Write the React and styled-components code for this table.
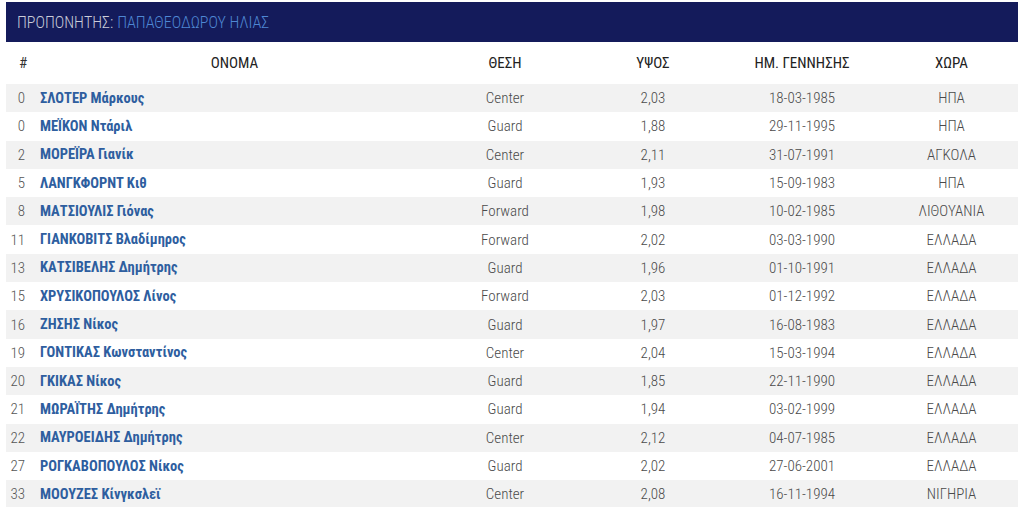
import styled, { createGlobalStyle } from "styled-components";

const GlobalStyle = createGlobalStyle`
  body {
    margin: 0;
    background: #ffffff;
    font-family: "Roboto Condensed", Roboto, "Liberation Sans", sans-serif;
    overflow: hidden;
  }
`;

const Page = styled.div`
  padding: 2px 6px 0 6px;
  width: 1012px;
`;

const CoachBar = styled.div`
  height: 40px;
  background-color: #141b5b;
  display: flex;
  align-items: center;
  padding: 0 11px;
  font-size: 16px;
  color: #c9ccd9;
  font-weight: 300;
`;

const CoachName = styled.span`
  color: #4f88d4;
  margin-left: 4px;
`;

const Table = styled.div`
  display: flex;
  flex-direction: column;
`;

const Row = styled.div`
  display: grid;
  grid-template-columns: 28px 401px 140px 156px 142px 145px;
  align-items: center;
  height: ${(p) => (p.$head ? "42px" : "28.3px")};
  background-color: ${(p) => (p.$striped ? "#f2f2f2" : "#ffffff")};
  font-size: 15px;
  color: #4a4a4a;
  font-weight: ${(p) => (p.$head ? 400 : 300)};
`;

const Num = styled.div`
  text-align: right;
  padding-right: 9px;
  color: #555;
`;

const HeadHash = styled.div`
  padding-left: 13px;
  color: #333;
`;

const Cell = styled.div`
  text-align: center;
  padding-left: ${(p) => (p.$last ? "12px" : "0")};
  color: ${(p) => (p.$head ? "#222" : "#4a4a4a")};
  white-space: nowrap;
`;

const Name = styled.div`
  padding-left: 6px;
  font-size: 14.5px;
  font-weight: 700;
  color: #2e5e9f;
  white-space: nowrap;
`;

const players = [
  ["0", "ΣΛΟΤΕΡ Μάρκους", "Center", "2,03", "18-03-1985", "ΗΠΑ"],
  ["0", "ΜΕΪΚΟΝ Ντάριλ", "Guard", "1,88", "29-11-1995", "ΗΠΑ"],
  ["2", "ΜΟΡΕΪΡΑ Γιανίκ", "Center", "2,11", "31-07-1991", "ΑΓΚΟΛΑ"],
  ["5", "ΛΑΝΓΚΦΟΡΝΤ Κιθ", "Guard", "1,93", "15-09-1983", "ΗΠΑ"],
  ["8", "ΜΑΤΣΙΟΥΛΙΣ Γιόνας", "Forward", "1,98", "10-02-1985", "ΛΙΘΟΥΑΝΙΑ"],
  ["11", "ΓΙΑΝΚΟΒΙΤΣ Βλαδίμηρος", "Forward", "2,02", "03-03-1990", "ΕΛΛΑΔΑ"],
  ["13", "ΚΑΤΣΙΒΕΛΗΣ Δημήτρης", "Guard", "1,96", "01-10-1991", "ΕΛΛΑΔΑ"],
  ["15", "ΧΡΥΣΙΚΟΠΟΥΛΟΣ Λίνος", "Forward", "2,03", "01-12-1992", "ΕΛΛΑΔΑ"],
  ["16", "ΖΗΣΗΣ Νίκος", "Guard", "1,97", "16-08-1983", "ΕΛΛΑΔΑ"],
  ["19", "ΓΟΝΤΙΚΑΣ Κωνσταντίνος", "Center", "2,04", "15-03-1994", "ΕΛΛΑΔΑ"],
  ["20", "ΓΚΙΚΑΣ Νίκος", "Guard", "1,85", "22-11-1990", "ΕΛΛΑΔΑ"],
  ["21", "ΜΩΡΑΪΤΗΣ Δημήτρης", "Guard", "1,94", "03-02-1999", "ΕΛΛΑΔΑ"],
  ["22", "ΜΑΥΡΟΕΙΔΗΣ Δημήτρης", "Center", "2,12", "04-07-1985", "ΕΛΛΑΔΑ"],
  ["27", "ΡΟΓΚΑΒΟΠΟΥΛΟΣ Νίκος", "Guard", "2,02", "27-06-2001", "ΕΛΛΑΔΑ"],
  ["33", "ΜΟΟΥΖΕΣ Κίνγκσλεϊ", "Center", "2,08", "16-11-1994", "ΝΙΓΗΡΙΑ"],
];

export default function App() {
  return (
    <>
      <GlobalStyle />
      <Page>
        <CoachBar>
          ΠΡΟΠΟΝΗΤΗΣ:<CoachName>ΠΑΠΑΘΕΟΔΩΡΟΥ ΗΛΙΑΣ</CoachName>
        </CoachBar>
        <Table>
          <Row $head>
            <HeadHash>#</HeadHash>
            <Cell $head>ΟΝΟΜΑ</Cell>
            <Cell $head>ΘΕΣΗ</Cell>
            <Cell $head>ΥΨΟΣ</Cell>
            <Cell $head>ΗΜ. ΓΕΝΝΗΣΗΣ</Cell>
            <Cell $head $last>ΧΩΡΑ</Cell>
          </Row>
          {players.map((p, i) => (
            <Row key={i} $striped={i % 2 === 0}>
              <Num>{p[0]}</Num>
              <Name>{p[1]}</Name>
              <Cell>{p[2]}</Cell>
              <Cell>{p[3]}</Cell>
              <Cell>{p[4]}</Cell>
              <Cell $last>{p[5]}</Cell>
            </Row>
          ))}
        </Table>
      </Page>
    </>
  );
}
